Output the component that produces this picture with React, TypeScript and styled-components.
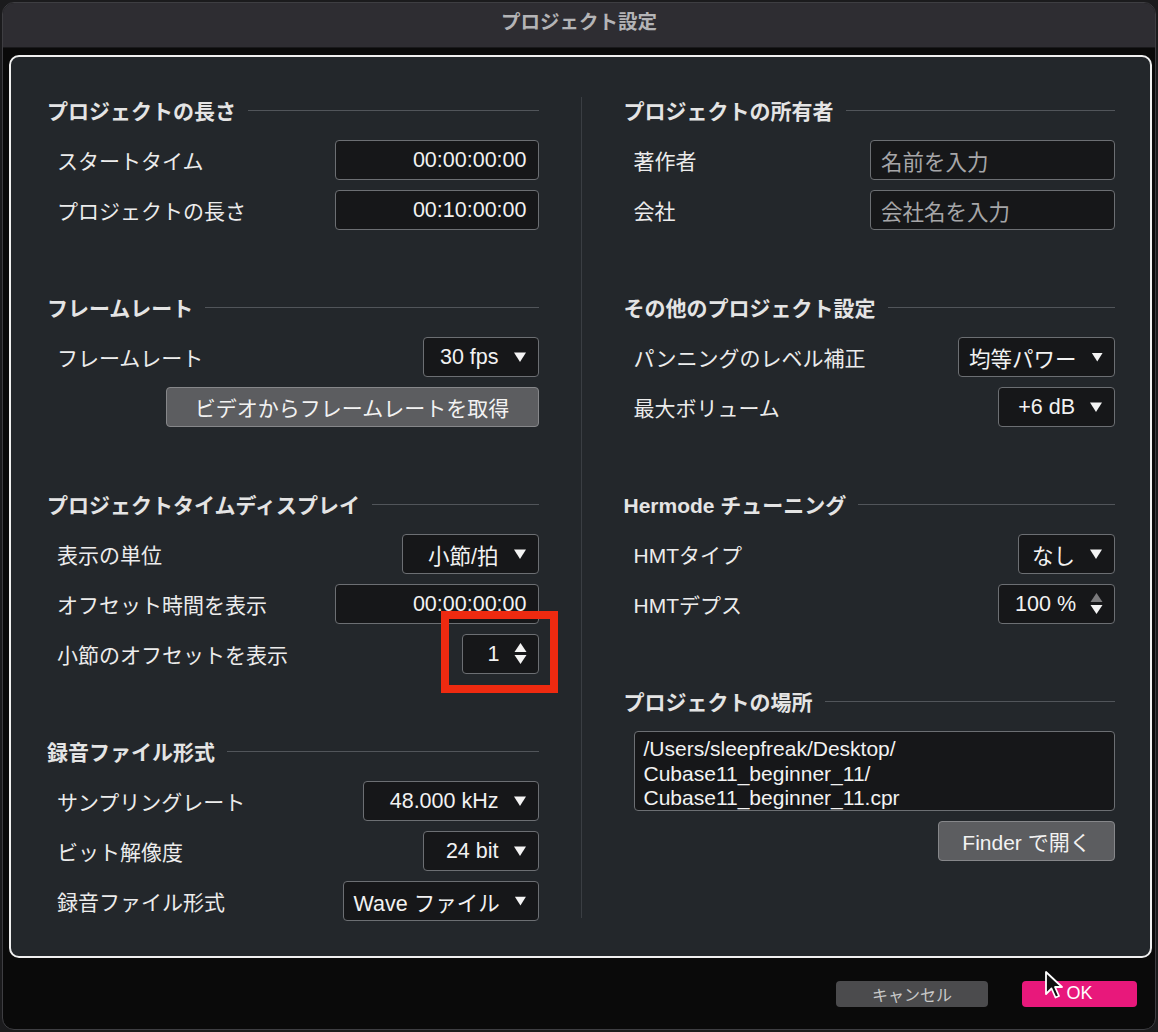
import React from 'react';
import styled, { createGlobalStyle } from 'styled-components';

const GlobalStyle = createGlobalStyle`
  html, body {
    margin: 0;
    padding: 0;
    background: #1b1b1d;
  }
  body {
    font-family: "Liberation Sans", "Noto Sans CJK JP", sans-serif;
  }
`;

const Window = styled.div`
  box-sizing: border-box;
  margin: 2px 2px 0 2px;
  width: 1154px;
  height: 1028px;
  display: flex;
  flex-direction: column;
  background: #0a0a0a;
  border: 1px solid #3e3e42;
  border-radius: 12px;
  overflow: hidden;
`;

const TitleBar = styled.div`
  height: 44px;
  flex: none;
  display: flex;
  align-items: center;
  justify-content: center;
  background: #2e2d32;
  border-bottom: 1px solid #19191b;
`;

const Title = styled.h1`
  margin: 0 0 4px;
  font-size: 19.5px;
  line-height: 1;
  font-weight: 700;
  color: #b4b4b6;
`;

const Body = styled.div`
  flex: 1;
  display: flex;
  flex-direction: column;
  padding: 7px 3px 0 6px;
`;

const Panel = styled.div`
  box-sizing: border-box;
  height: 903px;
  flex: none;
  border: 2px solid #f0f0f0;
  border-radius: 10px;
  background: #23272b;
  padding: 28px 35px 0 36px;
`;

const Columns = styled.div`
  display: grid;
  grid-template-columns: 1fr 1px 1fr;
  column-gap: 42px;
`;

const Column = styled.div`
  display: flex;
  flex-direction: column;
  gap: 47px;
`;

const Divider = styled.div`
  background: #3a3e43;
  margin: 12px 0 8px;
`;

const Section = styled.section`
  display: flex;
  flex-direction: column;
`;

const SectionHeader = styled.h2`
  margin: 0;
  height: 50px;
  display: flex;
  align-items: center;
  gap: 12px;
  font-size: 21px;
  font-weight: 700;
  color: #e4e4e4;
  white-space: nowrap;

  &::after {
    content: '';
    flex: 1;
    height: 1px;
    background: #51555a;
  }
`;

const Row = styled.div<{ $end?: boolean }>`
  height: 50px;
  display: flex;
  align-items: center;
  justify-content: ${(p) => (p.$end ? 'flex-end' : 'space-between')};
  padding-left: 10px;
`;

const Label = styled.span`
  font-size: 21px;
  color: #ececec;
  white-space: nowrap;
`;

const Field = styled.div<{ $w: number; $placeholder?: boolean }>`
  box-sizing: border-box;
  width: ${(p) => p.$w}px;
  height: 40px;
  display: flex;
  align-items: center;
  justify-content: ${(p) => (p.$placeholder ? 'flex-start' : 'flex-end')};
  gap: 14px;
  padding: 0 11px 0 10px;
  background: #161719;
  border: 1px solid #6c6f73;
  border-radius: 4px;
  font-size: 21.5px;
  color: ${(p) => (p.$placeholder ? '#a6a6a8' : '#f2f2f2')};
  white-space: nowrap;
`;

const Anchor = styled.div`
  position: relative;
`;

const Highlight = styled.div`
  position: absolute;
  left: -21px;
  top: -23px;
  right: -19px;
  bottom: -19px;
  border: 8px solid #ee2a10;
  pointer-events: none;
`;

const ActionButton = styled.div<{ $w: number }>`
  box-sizing: border-box;
  width: ${(p) => p.$w}px;
  height: 40px;
  display: flex;
  align-items: center;
  justify-content: center;
  background: #5c5d60;
  border: 1px solid #86878a;
  border-radius: 4px;
  font-size: 21px;
  color: #f2f2f2;
  white-space: nowrap;
`;

const PathBox = styled.div`
  box-sizing: border-box;
  margin: 5px 0 10px 10px;
  height: 80px;
  padding: 5px 9px;
  background: #161719;
  border: 1px solid #6c6f73;
  border-radius: 4px;
  font-size: 21px;
  line-height: 24.5px;
  color: #f2f2f2;
`;

const ButtonRow = styled.div`
  display: flex;
  justify-content: flex-end;
`;

const Footer = styled.div`
  flex: 1;
  display: flex;
  align-items: center;
  justify-content: flex-end;
  gap: 34px;
  padding-right: 15px;
`;

const FooterButton = styled.div<{ $primary?: boolean }>`
  position: relative;
  width: ${(p) => (p.$primary ? 115 : 152)}px;
  height: 26px;
  display: flex;
  align-items: center;
  justify-content: center;
  border-radius: 4px;
  background: ${(p) => (p.$primary ? '#e8187b' : '#4b4b4d')};
  color: ${(p) => (p.$primary ? '#ffffff' : '#c9c9c9')};
  font-size: ${(p) => (p.$primary ? 18 : 16)}px;
`;

const Cursor = styled.svg`
  position: absolute;
  left: 22px;
  top: -11px;
`;

const Caret = () => (
  <svg width="14" height="12" viewBox="0 0 14 12">
    <path d="M1 1.5 H13 L7 11 Z" fill="#f4f4f4" />
  </svg>
);

const Stepper = ({ topDisabled }: { topDisabled?: boolean }) => (
  <svg width="13" height="24" viewBox="0 0 13 24">
    <path d="M6.5 1 L12.5 10 H0.5 Z" fill={topDisabled ? '#7a7a7c' : '#f4f4f4'} />
    <path d="M0.5 13 H12.5 L6.5 22 Z" fill="#f4f4f4" />
  </svg>
);

const Select = ({ w, value }: { w: number; value: string }) => (
  <Field $w={w}>
    <span>{value}</span>
    <Caret />
  </Field>
);

export default function App() {
  return (
    <>
      <GlobalStyle />
      <Window>
        <TitleBar>
          <Title>プロジェクト設定</Title>
        </TitleBar>
        <Body>
          <Panel>
            <Columns>
              <Column>
                <Section>
                  <SectionHeader>プロジェクトの長さ</SectionHeader>
                  <Row>
                    <Label>スタートタイム</Label>
                    <Field $w={204}>00:00:00:00</Field>
                  </Row>
                  <Row>
                    <Label>プロジェクトの長さ</Label>
                    <Field $w={204}>00:10:00:00</Field>
                  </Row>
                </Section>
                <Section>
                  <SectionHeader>フレームレート</SectionHeader>
                  <Row>
                    <Label>フレームレート</Label>
                    <Select w={116} value="30 fps" />
                  </Row>
                  <Row $end>
                    <ActionButton $w={373}>ビデオからフレームレートを取得</ActionButton>
                  </Row>
                </Section>
                <Section>
                  <SectionHeader>プロジェクトタイムディスプレイ</SectionHeader>
                  <Row>
                    <Label>表示の単位</Label>
                    <Select w={137} value="小節/拍" />
                  </Row>
                  <Row>
                    <Label>オフセット時間を表示</Label>
                    <Field $w={204}>00:00:00:00</Field>
                  </Row>
                  <Row>
                    <Label>小節のオフセットを表示</Label>
                    <Anchor>
                      <Field $w={77}>
                        <span>1</span>
                        <Stepper />
                      </Field>
                      <Highlight />
                    </Anchor>
                  </Row>
                </Section>
                <Section>
                  <SectionHeader>録音ファイル形式</SectionHeader>
                  <Row>
                    <Label>サンプリングレート</Label>
                    <Select w={176} value="48.000 kHz" />
                  </Row>
                  <Row>
                    <Label>ビット解像度</Label>
                    <Select w={116} value="24 bit" />
                  </Row>
                  <Row>
                    <Label>録音ファイル形式</Label>
                    <Select w={196} value="Wave ファイル" />
                  </Row>
                </Section>
              </Column>

              <Divider />

              <Column>
                <Section>
                  <SectionHeader>プロジェクトの所有者</SectionHeader>
                  <Row>
                    <Label>著作者</Label>
                    <Field $w={245} $placeholder>名前を入力</Field>
                  </Row>
                  <Row>
                    <Label>会社</Label>
                    <Field $w={245} $placeholder>会社名を入力</Field>
                  </Row>
                </Section>
                <Section>
                  <SectionHeader>その他のプロジェクト設定</SectionHeader>
                  <Row>
                    <Label>パンニングのレベル補正</Label>
                    <Select w={157} value="均等パワー" />
                  </Row>
                  <Row>
                    <Label>最大ボリューム</Label>
                    <Select w={117} value="+6 dB" />
                  </Row>
                </Section>
                <Section>
                  <SectionHeader>Hermode チューニング</SectionHeader>
                  <Row>
                    <Label>HMTタイプ</Label>
                    <Select w={97} value="なし" />
                  </Row>
                  <Row>
                    <Label>HMTデプス</Label>
                    <Field $w={117}>
                      <span>100 %</span>
                      <Stepper topDisabled />
                    </Field>
                  </Row>
                </Section>
                <Section>
                  <SectionHeader>プロジェクトの場所</SectionHeader>
                  <PathBox>
                    /Users/sleepfreak/Desktop/
                    <br />
                    Cubase11_beginner_11/
                    <br />
                    Cubase11_beginner_11.cpr
                  </PathBox>
                  <ButtonRow>
                    <ActionButton $w={177}>Finder で開く</ActionButton>
                  </ButtonRow>
                </Section>
              </Column>
            </Columns>
          </Panel>
          <Footer>
            <FooterButton>キャンセル</FooterButton>
            <FooterButton $primary>
              OK
              <Cursor width="20" height="30" viewBox="0 0 20 30">
                <path
                  d="M2 2 L2 24 L7.5 18.5 L11.5 27.5 L15 26 L11 17 L18 17 Z"
                  fill="#111"
                  stroke="#fff"
                  strokeWidth="1.8"
                  strokeLinejoin="round"
                />
              </Cursor>
            </FooterButton>
          </Footer>
        </Body>
      </Window>
    </>
  );
}
